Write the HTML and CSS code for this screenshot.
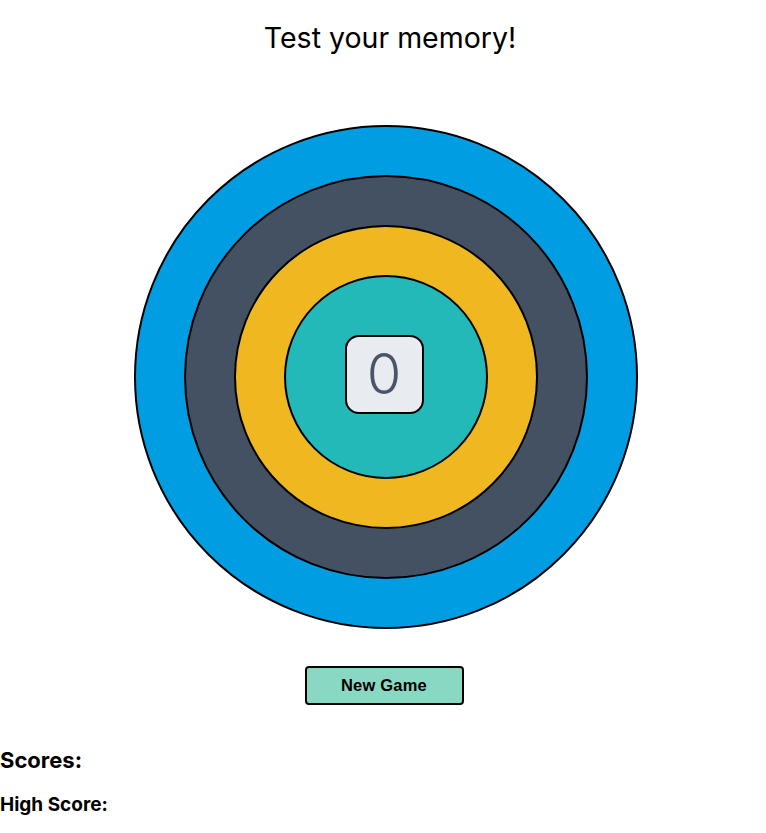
FILE: index.html
```html
<!DOCTYPE html>
<html>
<head>
<meta charset="utf-8">
<link rel="stylesheet" href="styles.css">
</head>
<body>
<h1 class="title">Test your memory!</h1>
<div class="board">
  <div class="ring ring-blue">
    <div class="ring ring-slate">
      <div class="ring ring-yellow">
        <div class="ring ring-teal">
          <div class="counter">0</div>
        </div>
      </div>
    </div>
  </div>
</div>
<div class="actions">
  <button class="btn">New Game</button>
</div>
<h2 class="scores">Scores:</h2>
<h3 class="high">High Score:</h3>
</body>
</html>
```
FILE: styles.css
```css
* { box-sizing: border-box; }
body {
  margin: 0;
  font-family: "Inter", "Noto Sans", sans-serif;
  color: #000;
  background: #fff;
}
.title {
  margin: 20px 0 0;
  font-size: 28.5px;
  line-height: 36px;
  font-weight: 400;
  text-align: center;
  padding-left: 14px;
}
.board {
  display: flex;
  justify-content: center;
  margin-top: 69px;
  padding-left: 6px;
}
.ring {
  border-radius: 50%;
  border: 2px solid #000;
  display: flex;
  align-items: center;
  justify-content: center;
}
.ring-blue { width: 504px; height: 504px; background: #009de2; }
.ring-slate { width: 404px; height: 404px; background: #445162; }
.ring-yellow { width: 304px; height: 304px; background: #efb820; }
.ring-teal { width: 204px; height: 204px; background: #22b9b8; }
.counter {
  width: 79px;
  height: 79px;
  margin: 0 4px 6px 0;
  border: 2px solid #000;
  border-radius: 14px;
  background: #e8ecf1;
  color: #4a5567;
  font-size: 56px;
  font-weight: 300;
  display: flex;
  align-items: center;
  justify-content: center;
}
.actions {
  display: flex;
  justify-content: center;
  margin-top: 37px;
  padding-left: 2px;
}
.btn {
  width: 159px;
  height: 39px;
  background: #88d8c4;
  border: 2px solid #000;
  border-radius: 4px;
  font-family: "Liberation Sans", Arial, sans-serif;
  font-weight: 700;
  font-size: 16.5px;
  letter-spacing: 0.2px;
  color: #000;
}
.scores {
  margin: 42px 0 0;
  font-size: 22px;
  line-height: 26px;
  font-weight: 700;
}
.high {
  margin: 21px 0 0;
  font-size: 19px;
  line-height: 22px;
  font-weight: 700;
}
```
